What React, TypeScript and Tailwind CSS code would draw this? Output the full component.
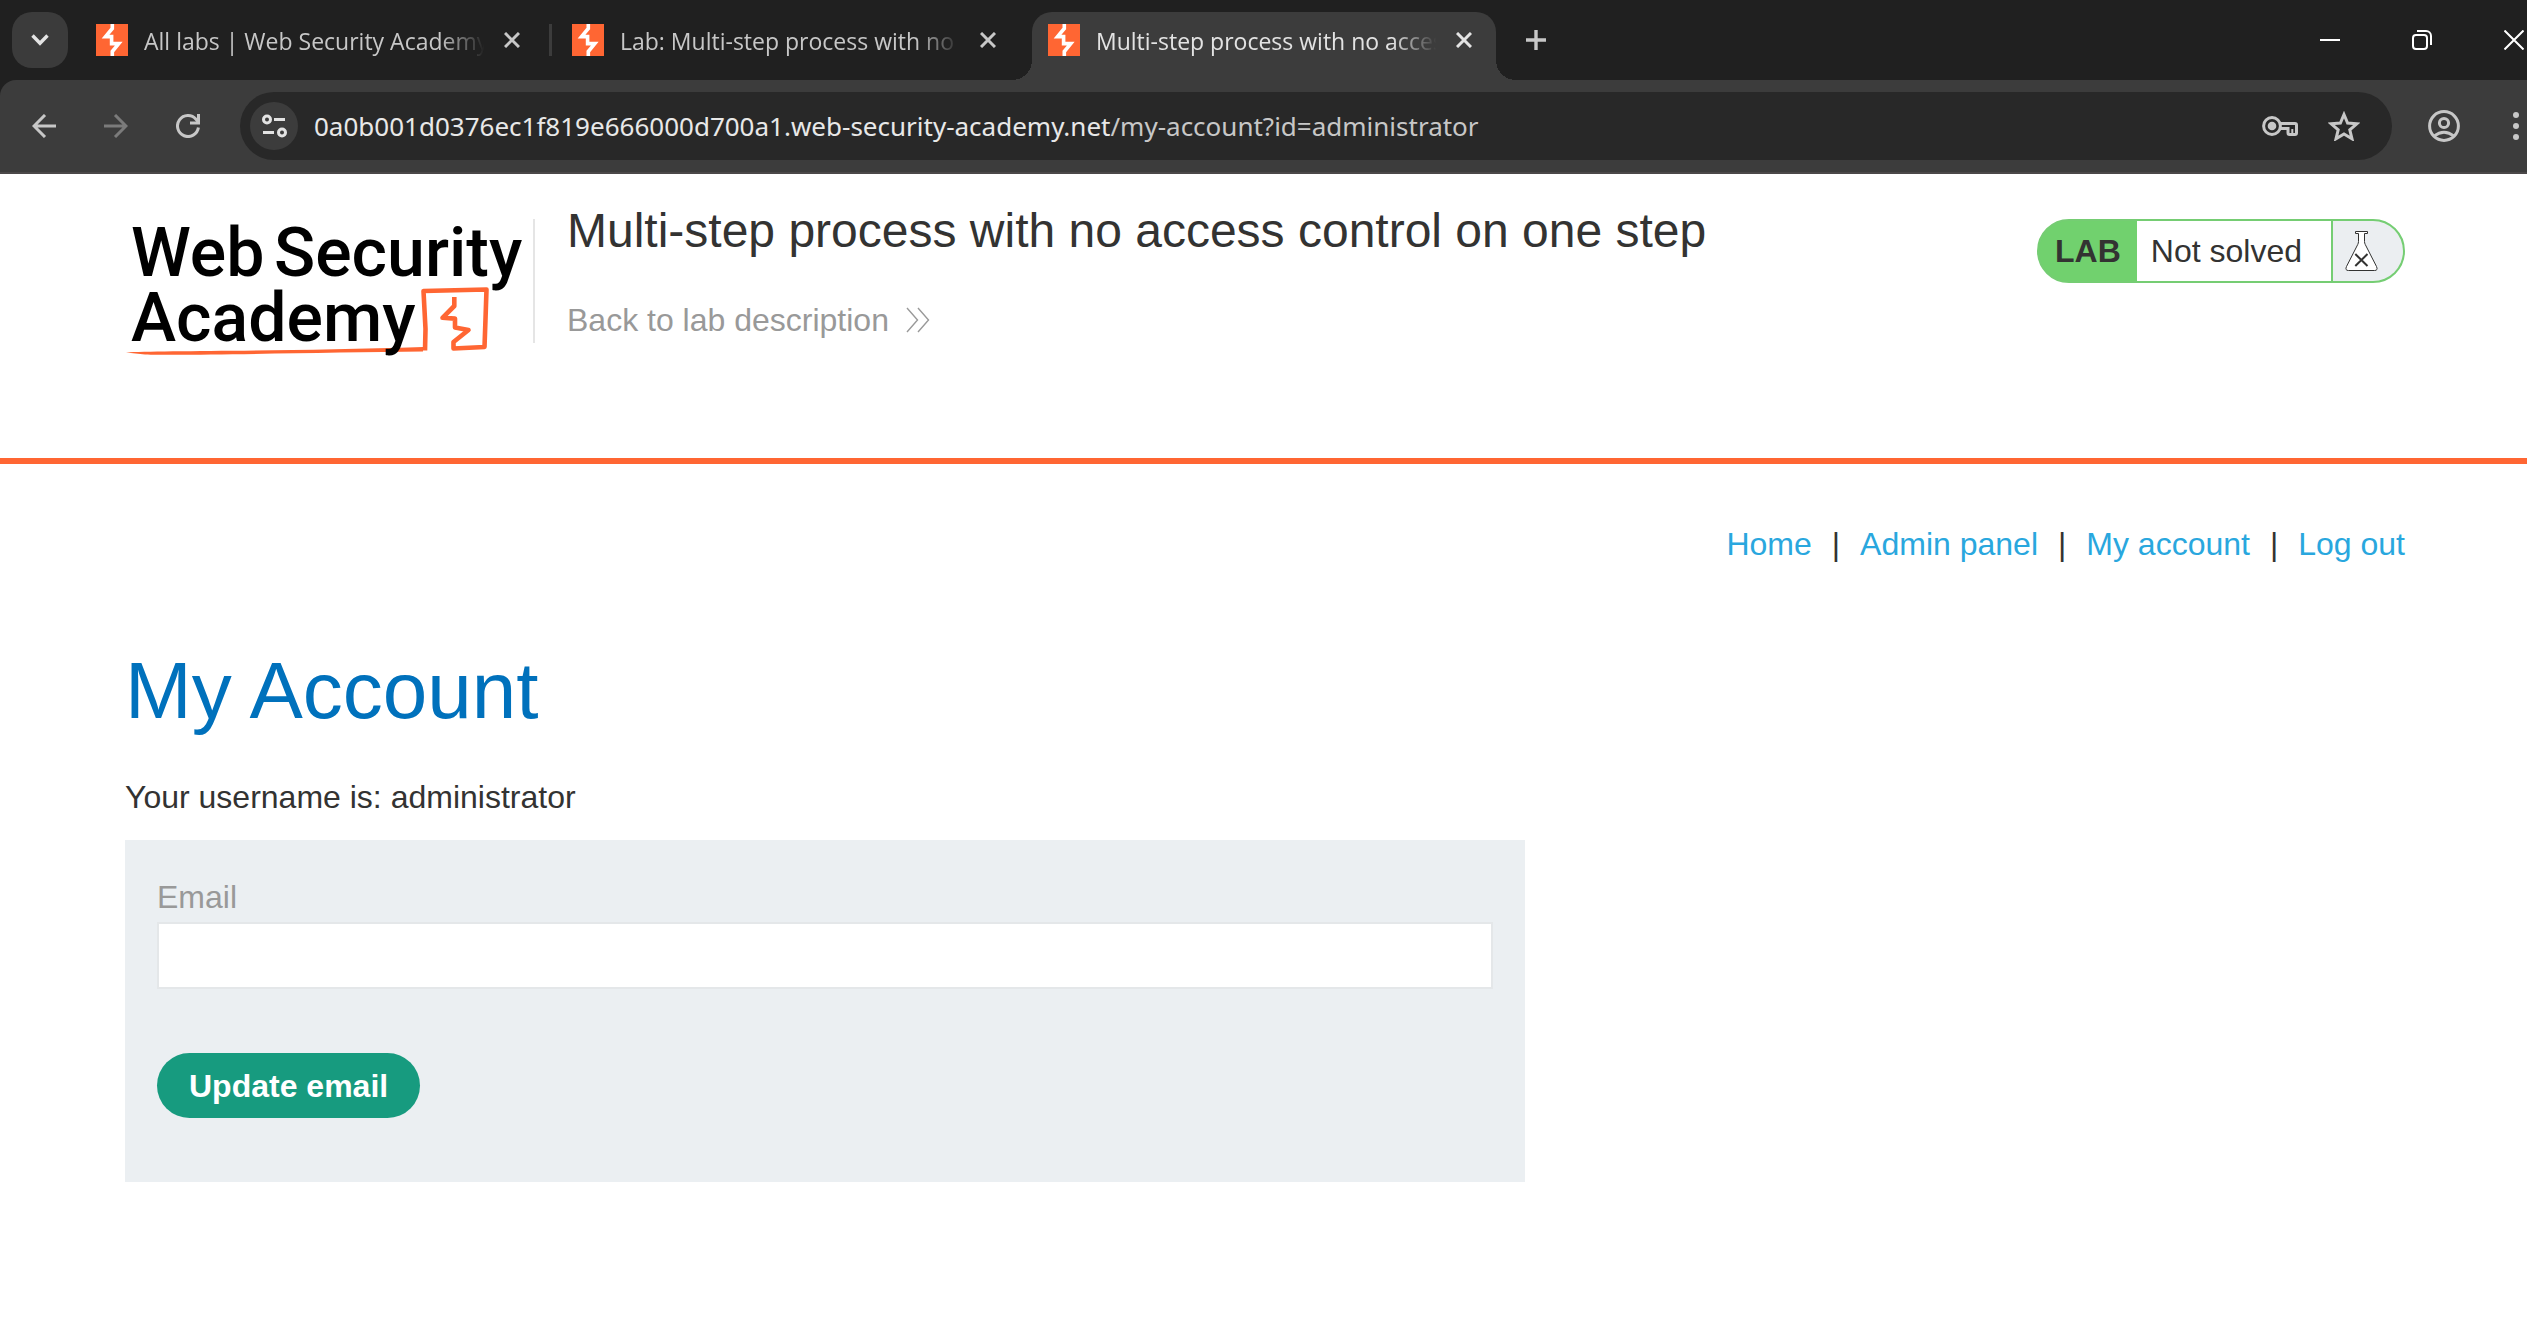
import { useState } from "react";
import clsx from "clsx";

type TabItem = {
  id: number;
  title: string;
  active?: boolean;
};

const tabs: TabItem[] = [
  { id: 1, title: "All labs | Web Security Academy" },
  { id: 2, title: "Lab: Multi-step process with no access control" },
  { id: 3, title: "Multi-step process with no access control", active: true },
];

const navLinks = ["Home", "Admin panel", "My account", "Log out"];

function Favicon() {
  return (
    <svg width="32" height="32" viewBox="0 0 32 32" className="shrink-0">
      <rect width="32" height="32" fill="#ff6633" />
      <path d="M16.3 0V4.5L9.5 12.6H15.6V19.6H22.8L16.3 27.5V32" fill="none" stroke="#fff" strokeWidth="3.6" />
    </svg>
  );
}

function CloseIcon() {
  return (
    <svg width="16" height="16" viewBox="0 0 16 16" fill="none" stroke="currentColor" strokeWidth="3">
      <path d="M1 1L15 15M15 1L1 15" />
    </svg>
  );
}

function Tab({ tab }: { tab: TabItem }) {
  return (
    <div
      className={clsx(
        "relative flex h-[68px] w-[464px] items-center px-4 pb-3",
        tab.active ? "rounded-t-[20px] bg-[#3c3c3c] text-[#e3e3e3]" : "text-[#c7c7c7]"
      )}
    >
      {tab.active && (
        <>
          <span className="absolute bottom-0 -left-5 size-5 bg-[radial-gradient(circle_at_0_0,transparent_20px,#3c3c3c_20px)]" />
          <span className="absolute bottom-0 -right-5 size-5 bg-[radial-gradient(circle_at_100%_0,transparent_20px,#3c3c3c_20px)]" />
        </>
      )}
      <Favicon />
      <span className="ml-4 min-w-0 flex-1 overflow-hidden whitespace-nowrap pt-[2px] text-[23px] leading-8 [mask-image:linear-gradient(to_right,#000_86%,transparent_99%)]">
        {tab.title}
      </span>
      <button type="button" aria-label="Close tab" className="ml-2 flex size-8 items-center justify-center">
        <CloseIcon />
      </button>
    </div>
  );
}

function TabStrip() {
  return (
    <div className="flex h-20 items-end bg-[#202020] pl-3">
      <button
        type="button"
        aria-label="Search tabs"
        className="mb-3 flex size-14 items-center justify-center rounded-[20px] bg-[#3b3b3b] text-[#e3e3e3]"
      >
        <svg width="18" height="12" viewBox="0 0 18 12" fill="none" stroke="currentColor" strokeWidth="3.4">
          <path d="M1.5 1.5L9 9.2L16.5 1.5" />
        </svg>
      </button>
      <div className="ml-3 flex">
        {tabs.map((tab, i) => (
          <div key={tab.id} className="flex">
            {i > 0 && (
              <div className="flex w-3 justify-center pt-3">
                {i === 1 && <span className="h-8 w-[3px] bg-[#3c3c3c]" />}
              </div>
            )}
            <Tab tab={tab} />
          </div>
        ))}
      </div>
      <button type="button" aria-label="New tab" className="mb-5 ml-5 flex size-10 items-center justify-center text-[#c7c7c7]">
        <svg width="20" height="20" viewBox="0 0 20 20" stroke="currentColor" strokeWidth="3.4">
          <path d="M10 0V20M0 10H20" />
        </svg>
      </button>
      <div className="mb-[30px] ml-auto flex gap-[72px] pr-[3px] text-white">
        <button type="button" aria-label="Minimize">
          <svg width="20" height="20" viewBox="0 0 20 20" stroke="currentColor" strokeWidth="2">
            <path d="M0 10H20" />
          </svg>
        </button>
        <button type="button" aria-label="Restore">
          <svg width="20" height="20" viewBox="0 0 20 20" fill="none" stroke="currentColor" strokeWidth="2">
            <rect x="1" y="5" width="14" height="14" rx="3" />
            <path d="M5 1H14A5 5 0 0 1 19 6V15" />
          </svg>
        </button>
        <button type="button" aria-label="Close window">
          <svg width="20" height="20" viewBox="0 0 20 20" stroke="currentColor" strokeWidth="2">
            <path d="M0.5 0.5L19.5 19.5M19.5 0.5L0.5 19.5" />
          </svg>
        </button>
      </div>
    </div>
  );
}

function Toolbar() {
  return (
    <div className="bg-[#202020]">
      <div className="flex h-[94px] items-center rounded-tl-[16px] border-b-2 border-[#4b4849] bg-[#3c3c3c] px-2 text-[#c7c7c7]">
        <button type="button" aria-label="Back" className="flex w-[72px] justify-center">
          <svg width="24" height="24" viewBox="0 0 24 24" fill="none" stroke="currentColor" strokeWidth="3">
            <path d="M24 12H2M13 1L2 12L13 23" />
          </svg>
        </button>
        <button type="button" aria-label="Forward" className="flex w-[72px] justify-center text-[#7b7b7b]">
          <svg width="24" height="24" viewBox="0 0 24 24" fill="none" stroke="currentColor" strokeWidth="3">
            <path d="M0 12H22M11 1L22 12L11 23" />
          </svg>
        </button>
        <button type="button" aria-label="Reload" className="flex w-[72px] justify-center">
          <svg width="24" height="24" viewBox="0 0 24 24" fill="none" stroke="currentColor" strokeWidth="3">
            <path d="M22.4 13.5A10.5 10.5 0 1 1 20 5.2L22.3 8" />
            <path d="M22.5 0V9H14" />
          </svg>
        </button>

        <div className="ml-4 flex h-[68px] min-w-0 flex-1 items-center rounded-full bg-[#282828] pl-[10px] pr-8">
          <button
            type="button"
            aria-label="View site information"
            className="flex size-12 items-center justify-center rounded-full bg-[#3c3c3c] text-[#e3e3e3]"
          >
            <svg width="26" height="24" viewBox="0 0 26 24" fill="none" stroke="currentColor" strokeWidth="3">
              <circle cx="6" cy="5.5" r="3.5" />
              <path d="M13 5.5H24M2 18.5H13" />
              <circle cx="21" cy="18.5" r="3.5" />
            </svg>
          </button>
          <div className="ml-4 min-w-0 flex-1 truncate font-['Noto_Sans','Open_Sans',sans-serif] text-[26px] leading-9 text-[#c7c7c7]">
            <span className="text-[#e8e8e8]">0a0b001d0376ec1f819e666000d700a1.web-security-academy.net</span>
            /my-account?id=administrator
          </div>
          <button type="button" aria-label="Passwords">
            <svg width="36" height="20" viewBox="0 0 36 20" fill="none" stroke="currentColor" strokeWidth="3">
              <circle cx="10" cy="10" r="8.4" />
              <circle cx="10" cy="10" r="4.3" fill="currentColor" stroke="none" />
              <path d="M18 7.5H33Q34.5 7.5 34.5 9V17Q34.5 18.5 33 18.5H27.5Q26 18.5 26 17V12.5H18" />
              <path d="M30.3 13V18" strokeWidth="2" />
            </svg>
          </button>
          <button type="button" aria-label="Bookmark this tab" className="ml-[30px]">
            <svg width="32" height="30" viewBox="0 0 32 30" fill="none" stroke="currentColor" strokeWidth="3">
              <path d="M16 3.5L19.6 12L28.8 12.8L21.8 18.8L24 27.8L16 23L8 27.8L10.2 18.8L3.2 12.8L12.4 12Z" />
            </svg>
          </button>
        </div>

        <button type="button" aria-label="Profile" className="ml-9">
          <svg width="32" height="32" viewBox="0 0 32 32" fill="none" stroke="currentColor" strokeWidth="3">
            <circle cx="16" cy="16" r="14.4" />
            <circle cx="16" cy="13" r="4.6" />
            <path d="M6 26.2Q16 18.2 26 26.2" />
          </svg>
        </button>
        <button type="button" aria-label="Menu" className="ml-[53px]">
          <svg width="6" height="28" viewBox="0 0 6 28" fill="currentColor">
            <circle cx="3" cy="3" r="3" />
            <circle cx="3" cy="14" r="3" />
            <circle cx="3" cy="25" r="3" />
          </svg>
        </button>
      </div>
    </div>
  );
}

function AcademyLogo() {
  return (
    <svg
      width="400"
      height="142"
      viewBox="0 0 400 142"
      className="shrink-0 overflow-visible"
      role="img"
      aria-label="Web Security Academy"
    >
      <path d="M1 133.4C30 131.5 160 132.5 298 128V132.6C200 133.5 60 136.8 20 135.4Z" fill="#ff6633" />
      <path
        d="M300 131.5L300.5 110L298.5 72L361.5 70.5L360.5 100L359.5 128L328.5 129.5V123L343.5 111L330 108.6V99.6L317.5 98.8L329.3 87V78"
        fill="none"
        stroke="#ff6633"
        strokeWidth="4.6"
        strokeLinejoin="round"
      />
      <g className="font-['Roboto',sans-serif] text-[68px] font-medium" fill="#000">
        <text x="6" y="57">Web</text>
        <text x="149" y="57">Security</text>
        <text x="6" y="122">Academy</text>
      </g>
    </svg>
  );
}

function LabStatus() {
  return (
    <div className="mt-[17px] ml-auto flex h-16 overflow-hidden rounded-full border-2 border-[#75cd73] bg-[#71d16e] leading-[60px]">
      <span className="px-4 font-bold">LAB</span>
      <p className="bg-white pl-[14px] pr-[29px]">Not solved</p>
      <span className="flex w-[72px] items-center border-l-2 border-[#75cd73] bg-[#ebeef1] pl-3">
        <svg width="33" height="42" viewBox="0 0 33 42" fill="none" stroke="#333332">
          <path
            d="M10.5 1.5H22.5V3.5H19.5V11.5Q19.5 13 20.3 14.6L31.5 36.5Q33.3 40.5 29.5 40.5H3.5Q-0.3 40.5 1.5 36.5L12.7 14.6Q13.5 13 13.5 11.5V3.5H10.5Z"
            fill="#fff"
          />
          <path d="M10.3 24L22.5 36M22.5 24L10.3 36" strokeWidth="2" />
        </svg>
      </span>
    </div>
  );
}

function LabHeader() {
  return (
    <header className="flex min-h-[290px] items-start border-b-[6px] border-[#ff6633] pt-7 pl-[125px] pr-[122px]">
      <div className="mt-[17px] flex">
        <AcademyLogo />
        <div className="ml-2 h-[124px] w-[2px] bg-[#e5e5e5]" />
      </div>
      <div className="ml-8">
        <h2 className="text-5xl leading-[58px]">Multi-step process with no access control on one step</h2>
        <a href="#" className="mt-10 flex items-center gap-[17px] text-[#999999]">
          Back to lab description
          <svg width="24" height="26" viewBox="0 0 24 26" fill="none" stroke="currentColor" strokeWidth="1.4">
            <path d="M1 1L11.5 13L1 25M12 1L22.5 13L12 25" />
          </svg>
        </a>
      </div>
      <LabStatus />
    </header>
  );
}

export default function App() {
  const [email, setEmail] = useState("");

  return (
    <div className="min-h-screen overflow-hidden bg-white">
      <div className="font-['Open_Sans','Noto_Sans',sans-serif]">
        <TabStrip />
        <Toolbar />
      </div>

      <div className="font-['Liberation_Sans',Arial,sans-serif] text-[32px] leading-10 text-[#333332]">
        <LabHeader />
        <main className="pt-[60px] pl-[125px] pr-[122px]">
          <nav className="flex justify-end gap-5">
            {navLinks.map((link, i) => (
              <div key={link} className="flex gap-5">
                {i > 0 && <span>|</span>}
                <a href="#" className="text-[#29a7de]">
                  {link}
                </a>
              </div>
            ))}
          </nav>

          <h1 className="mt-[79px] text-[80px] leading-[96px] text-[#0071bc]">My Account</h1>
          <p className="mt-[38px]">Your username is: administrator</p>

          <form
            className="mt-[23px] max-w-[1400px] bg-[#ebeff2] px-8 pt-[37px] pb-16"
            onSubmit={(e) => e.preventDefault()}
          >
            <label htmlFor="email" className="block text-[#999999]">
              Email
            </label>
            <input
              id="email"
              type="email"
              value={email}
              onChange={(e) => setEmail(e.target.value)}
              className="mt-[5px] block h-[67px] w-full border-2 border-[#e4e7e9] bg-white px-4 outline-none"
            />
            <button type="submit" className="mt-16 block h-[65px] rounded-full bg-[#179b7f] px-8 font-bold text-white">
              Update email
            </button>
          </form>
        </main>
      </div>
    </div>
  );
}
